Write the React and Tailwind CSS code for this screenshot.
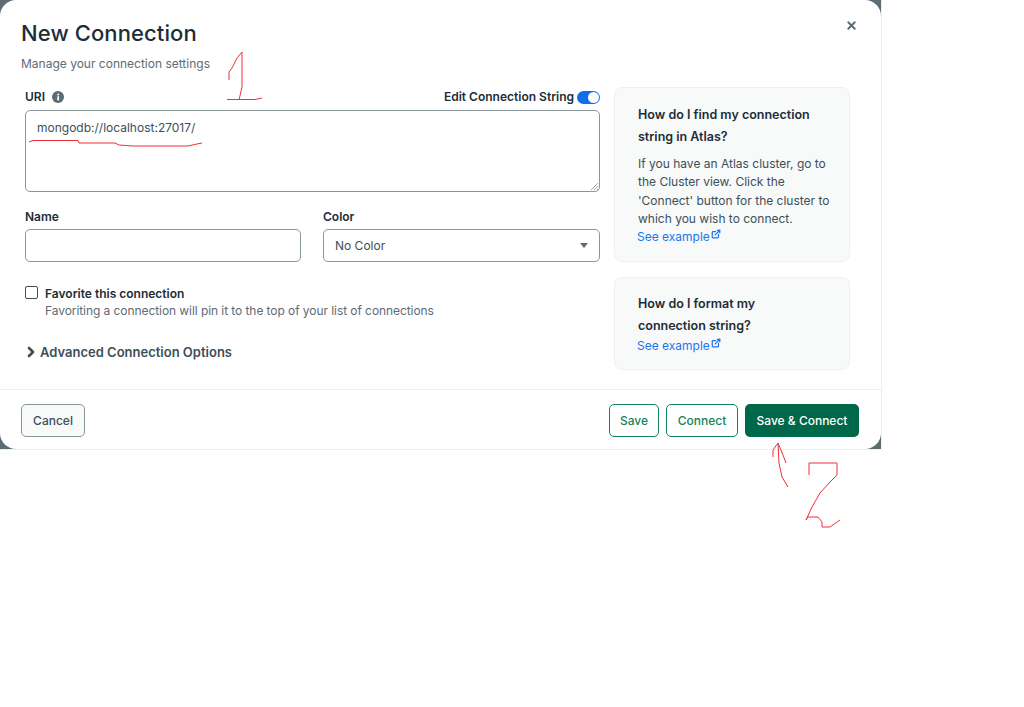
import React from "react";
import { X, ChevronRight, ExternalLink } from "lucide-react";

const Label = ({ children }) => (
    <span className="block text-[12px] leading-[16px] font-semibold text-[#1c2d38]">{children}</span>
);

const SeeExample = () => (
    <a className="flex items-start ml-[-1px] text-[12px] leading-[16px] text-[#1a75f0]">
        See example
        <ExternalLink size={10} strokeWidth={3} className="ml-[1px] mt-[0px]" />
    </a>
);

const App = () => {
    return (
        <div className="relative w-[1024px] h-[707px] bg-white overflow-hidden font-['Inter',sans-serif]">
            {/* Backdrop only shows at the corners of the dialog */}
            <div className="w-[882px] h-[450px] bg-[#5d6b73] bg-clip-padding border-r border-b border-dotted border-[#dde1e3]">
                <div className="relative h-full rounded-[16px] bg-white flex flex-col">
                    <button className="absolute right-[23px] top-[19px] text-[#5c6c75]">
                        <X size={13} strokeWidth={3.5} />
                    </button>

                    <div className="flex-1 pl-[21px] pr-[31px] pt-[19px]">
                        <h1 className="text-[22px] leading-[28px] font-medium tracking-[0.1px] text-[#1c2d38]">New Connection</h1>
                        <p className="mt-[9px] text-[12px] leading-[16px] text-[#5c6c75]">Manage your connection settings</p>

                        <div className="flex mt-[15px] pl-[4px]">
                            {/* Form column */}
                            <div className="w-[575px]">
                                <div className="flex items-center justify-between h-[26px] mt-[-3px]">
                                    <div className="flex items-center gap-[7px]">
                                        <Label>URI</Label>
                                        <svg width="12" height="12" viewBox="0 0 16 16">
                                            <circle cx="8" cy="8" r="8" fill="#5c6c75" />
                                            <rect x="7" y="7" width="2.4" height="5.5" fill="#fff" />
                                            <rect x="7" y="3.6" width="2.4" height="2.2" fill="#fff" />
                                        </svg>
                                    </div>
                                    <div className="flex items-center gap-[3px]">
                                        <Label>Edit Connection String</Label>
                                        <div className="flex items-center justify-end w-[23px] h-[13px] rounded-full bg-[#0f6ee8] pr-[1px]">
                                            <div className="w-[11px] h-[11px] rounded-full bg-white"></div>
                                        </div>
                                    </div>
                                </div>
                                <div className="relative h-[82px] border border-[#89979b] rounded-[5px] px-[11px] py-[9px] text-[12px] leading-[16px] text-[#3d4f58]">
                                    mongodb://localhost:27017/
                                    <svg className="absolute right-[0px] bottom-[0px]" width="10" height="10" viewBox="0 0 10 10">
                                        <path d="M2 9 L9 2 M5 9 L9 5 M8 9 L9 8" stroke="#8a979c" strokeWidth="0.8" />
                                    </svg>
                                </div>

                                <div className="flex gap-[22px] mt-[17px]">
                                    <div className="w-[276px]">
                                        <Label>Name</Label>
                                        <div className="mt-[4px] h-[33px] border border-[#89979b] rounded-[5px]"></div>
                                    </div>
                                    <div className="w-[277px]">
                                        <Label>Color</Label>
                                        <div className="mt-[4px] h-[33px] border border-[#89979b] rounded-[5px] flex items-center justify-between pl-[11px] pr-[11px] text-[12px] text-[#3d4f58]">
                                            No Color
                                            <span className="w-0 h-0 border-x-[4px] border-x-transparent border-t-[5px] border-t-[#5c6c75]"></span>
                                        </div>
                                    </div>
                                </div>

                                <div className="flex mt-[24px]">
                                    <div className="w-[13px] h-[13px] border-[1.5px] border-[#3d4f58] rounded-[2px]"></div>
                                    <div className="ml-[7px]">
                                        <Label>Favorite this connection</Label>
                                        <p className="mt-[1px] text-[12px] leading-[16px] tracking-[-0.07px] text-[#5c6c75]">Favoriting a connection will pin it to the top of your list of connections</p>
                                    </div>
                                </div>

                                <div className="flex items-center mt-[25px] ml-[0px] text-[#3d4f58]">
                                    <ChevronRight size={16} strokeWidth={4} className="ml-[-2px]" />
                                    <span className="ml-[1px] text-[13px] leading-[16px] font-semibold">Advanced Connection Options</span>
                                </div>
                            </div>

                            {/* Help cards */}
                            <div className="ml-[14px] w-[236px]">
                                <div className="h-[175px] rounded-[8px] border border-[#eef1f2] bg-[#f8f9f9] pl-[23px] pr-[14px] pt-[16px]">
                                    <h3 className="text-[12.5px] leading-[22px] font-semibold text-[#1c2d38]">How do I find my connection string in Atlas?</h3>
                                    <p className="mt-[7px] text-[12px] leading-[18.4px] text-[#3d4f58]">If you have an Atlas cluster, go to the Cluster view. Click the 'Connect' button for the cluster to which you wish to connect.</p>
                                    <SeeExample />
                                </div>
                                <div className="h-[93px] mt-[15px] rounded-[8px] border border-[#eef1f2] bg-[#f8f9f9] pl-[23px] pr-[40px] pt-[15px]">
                                    <h3 className="text-[12.5px] leading-[22px] font-semibold text-[#1c2d38]">How do I format my connection string?</h3>
                                    <div className="mt-[1px]"><SeeExample /></div>
                                </div>
                            </div>
                        </div>
                    </div>

                    {/* Footer */}
                    <div className="h-[60px] border-t border-[#eef1f2] flex items-start pt-[14px] pl-[21px] pr-[22px] text-[12px] font-medium">
                        <button className="w-[64px] h-[33px] rounded-[5px] border border-[#89979b] bg-[#f8f9f9] text-[#3d4f58]">Cancel</button>
                        <div className="flex-1"></div>
                        <button className="w-[50px] h-[33px] rounded-[5px] border border-[#13845a] text-[#13845a]">Save</button>
                        <button className="ml-[7px] w-[72px] h-[33px] rounded-[5px] border border-[#13845a] text-[#13845a]">Connect</button>
                        <button className="ml-[7px] w-[114px] h-[33px] rounded-[5px] bg-[#00684a] text-white">Save &amp; Connect</button>
                    </div>
                </div>
            </div>

            {/* Hand drawn red annotations */}
            <svg className="absolute left-0 top-0 pointer-events-none" width="1024" height="707" fill="none" stroke="#f0303a" strokeWidth="1">
                <path d="M229 80 L229 72 L232 68 L237 58 L242 52 L242 87 L239 100" />
                <path d="M227 99.5 L255 99.5 L262 98" />
                <path d="M29 142 L33 140.5 L78 140.5 L79 143 L115 143 L119 145 L133 146 L188 146 L197 144 L202 143" />
                <path d="M788 487 L782 477 L779 463 L778 443 L773 450 L773 457 M778 443 L783 455 L786 463" />
                <path d="M809 475 L809 463 L837 463 L837 475 L830 482 L820 493 L812 507 L806 520 L808 517 L818 517 L822 522 L822 527 L830 527 L840 520" />
            </svg>
        </div>
    );
};

export default App;
